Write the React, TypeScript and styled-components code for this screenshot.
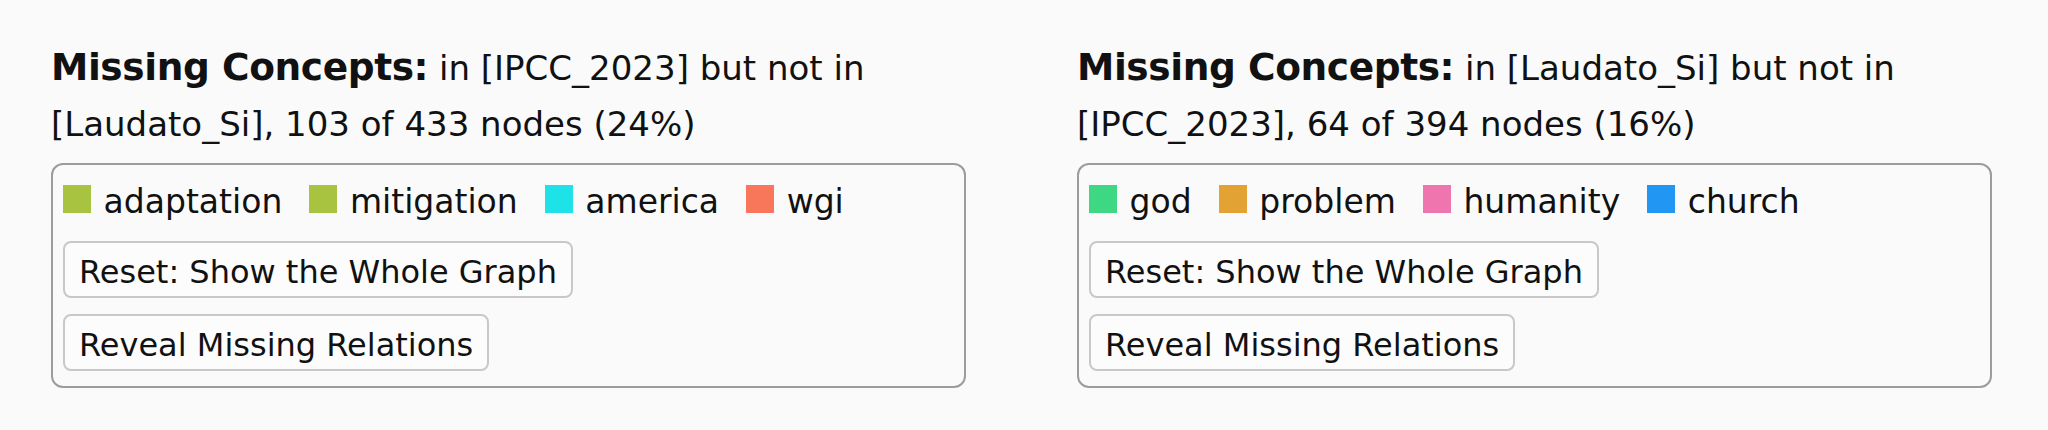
import React from 'react';
import styled, { createGlobalStyle } from 'styled-components';

const GlobalStyle = createGlobalStyle`
  body {
    margin: 0;
    background: #fafafa;
    color: #111;
    font-family: "DejaVu Sans", "Liberation Sans", sans-serif;
  }
`;

const Page = styled.div`
  display: grid;
  grid-template-columns: 915px 915px;
  column-gap: 111px;
  padding: 38.7px 0 0 51px;
`;

const Panel = styled.section`
  display: flex;
  flex-direction: column;
`;

const Heading = styled.div`
  font-size: 34px;
  line-height: 56.7px;
  margin-bottom: 9.7px;
`;

const Title = styled.b`
  font-size: 37.5px;
  font-weight: 700;
  letter-spacing: -0.4px;
`;

const Box = styled.div`
  display: flex;
  flex-direction: column;
  align-items: flex-start;
  border: 2px solid #9c9c9c;
  border-radius: 12px;
  padding: 17px 10px 15px;
`;

const Legend = styled.div`
  display: flex;
  flex-wrap: wrap;
  align-items: baseline;
  column-gap: 27px;
  font-size: 33px;
  margin-bottom: 20px;
`;

const LegendItem = styled.span`
  display: inline-flex;
  align-items: baseline;
  gap: 12.6px;
`;

const Swatch = styled.span<{ $color: string }>`
  display: inline-block;
  width: 28px;
  height: 28px;
  background: ${(p) => p.$color};
`;

const Button = styled.button`
  font-family: inherit;
  font-size: 32px;
  color: #111;
  background: #fcfcfc;
  border: 2px solid #c8c8c8;
  border-radius: 8px;
  padding: 10px 14px 5px;
  line-height: normal;
  & + & {
    margin-top: 16px;
  }
`;

type Concept = { name: string; color: string };

type Comparison = {
  source: string;
  target: string;
  missing: number;
  total: number;
  concepts: Concept[];
};

const comparisons: Comparison[] = [
  {
    source: 'IPCC_2023',
    target: 'Laudato_Si',
    missing: 103,
    total: 433,
    concepts: [
      { name: 'adaptation', color: '#a8c33f' },
      { name: 'mitigation', color: '#a8c33f' },
      { name: 'america', color: '#1de2e8' },
      { name: 'wgi', color: '#f8775a' },
    ],
  },
  {
    source: 'Laudato_Si',
    target: 'IPCC_2023',
    missing: 64,
    total: 394,
    concepts: [
      { name: 'god', color: '#3fd882' },
      { name: 'problem', color: '#e3a234' },
      { name: 'humanity', color: '#ef75ae' },
      { name: 'church', color: '#2196f3' },
    ],
  },
];

const MissingPanel: React.FC<{ data: Comparison }> = ({ data }) => {
  const pct = Math.round((data.missing / data.total) * 100);
  return (
    <Panel>
      <Heading>
        <Title>Missing Concepts:</Title> in [{data.source}] but not in [{data.target}], {data.missing} of{' '}
        {data.total} nodes ({pct}%)
      </Heading>
      <Box>
        <Legend>
          {data.concepts.map((c) => (
            <LegendItem key={c.name}>
              <Swatch $color={c.color} />
              {c.name}
            </LegendItem>
          ))}
        </Legend>
        <Button>Reset: Show the Whole Graph</Button>
        <Button>Reveal Missing Relations</Button>
      </Box>
    </Panel>
  );
};

export default function App() {
  return (
    <>
      <GlobalStyle />
      <Page>
        {comparisons.map((c) => (
          <MissingPanel key={c.source} data={c} />
        ))}
      </Page>
    </>
  );
}
